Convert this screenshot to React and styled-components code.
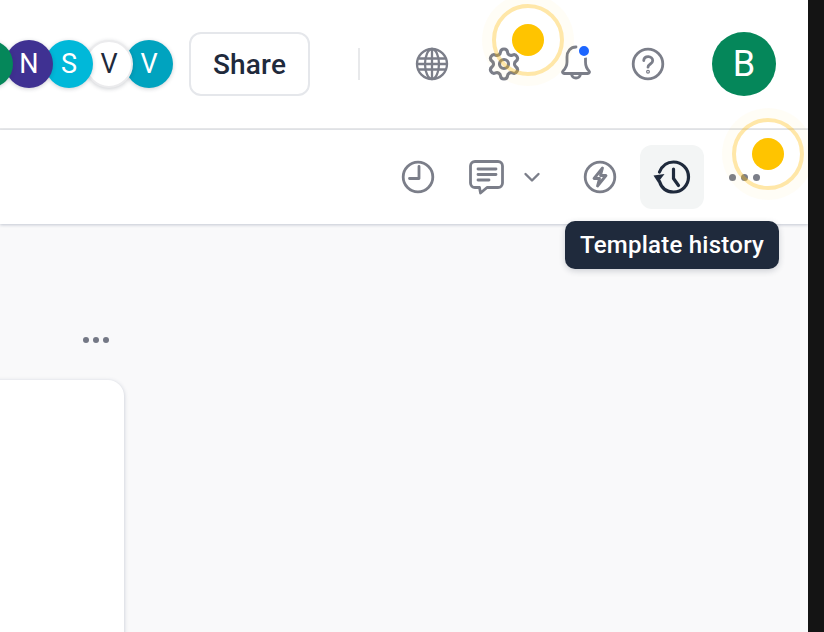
import styled, { createGlobalStyle } from "styled-components";
import { Settings } from "lucide-react";

const Global = createGlobalStyle`
    html, body { margin: 0; padding: 0; background: #141414; }
    body { font-family: Roboto, "Liberation Sans", sans-serif; }
`

const GRAY = "#7b7e89";
const NAVY = "#1f2a3c";

const Icon = ({ children, stroke = GRAY, width = 2.8 }) => (
    <svg width="32" height="32" viewBox="0 0 32 32" fill="none" stroke={stroke} strokeWidth={width}
        strokeLinecap="round" strokeLinejoin="round" style={{ overflow: "visible", display: "block", flex: "none" }}>
        {children}
    </svg>
)

const GlobeIcon = () => (
    <Icon width={2.3}>
        <circle cx="16" cy="16" r="15" />
        <ellipse cx="16" cy="16" rx="7" ry="15" />
        <path d="M16 1v30M3 10.500h26M1 16h30M3 21.500h26" />
    </Icon>
)

const BellIcon = () => (
    <Icon>
        <path d="M16 -1C10.500 -1 7 3.500 7 9v5c0 4-2 7-4 9-1 1-.5 2.500 1 2.500h24c1.500 0 2-1.500 1-2.500-2-2-3.500-5-3.500-9v-4" />
        <path d="M11.500 25.500c0 6 9 6 9 0" />
    </Icon>
)

const HelpIcon = () => (
    <Icon>
        <circle cx="16" cy="16" r="14.800" />
        <path d="M11.700 12.500c.6-5.300 9-5 9 .2 0 3.300-4.700 3.300-4.700 6.500" />
        <circle cx="16" cy="23.700" r=".6" />
    </Icon>
)

const ClockIcon = () => (
    <Icon>
        <circle cx="16" cy="16" r="14.800" />
        <path d="M17 5.500V17.500H7.500" />
    </Icon>
)

const CommentIcon = () => (
    <Icon>
        <path d="M5 0.500h23c2.500 0 4.500 2 4.500 4.500v17c0 2.500-2 4.500-4.500 4.500H17l-6.500 5.500-1-5.500H5C2.500 26.500 .5 24.500 .5 22V5C.5 2.500 2.500 .5 5 .5z" />
        <path d="M8 8h18M8 13.500h18M8 19h11" />
    </Icon>
)

const Chevron = () => (
    <svg width="20" height="20" viewBox="0 0 20 20" fill="none" stroke={GRAY} strokeWidth="2.400"
        strokeLinecap="round" strokeLinejoin="round" style={{ display: "block", flex: "none" }}>
        <path d="M3.500 7l6.500 6.500L16.500 7" />
    </svg>
)

const BoltIcon = () => (
    <Icon>
        <circle cx="16" cy="16" r="14.800" />
        <path d="M18.500 7L10 17.500h5.500l-2 7.500 8.500-10.500h-5.500z" fill="none" />
    </Icon>
)

const HistoryIcon = () => (
    <Icon stroke={NAVY} width={3.200}>
        <path d="M3.500 20.500C5.500 27 10.500 31 17.500 31c8.500 0 15-6.700 15-15S26 1 17.500 1C10.500 1 6 5 3.500 11" />
        <path d="M17.500 8v9.500l5 7" />
        <path d="M-2.500 14.500l11 -1.500-6.500 8.500z" fill={NAVY} stroke="none" />
    </Icon>
)

function App() {
    return (
        <Page>
            <Global />
            <Main>
                <Header>
                    <Avatars>
                        <Avatar $bg="#05875a" $layer={5} />
                        <Avatar $bg="#3f3192" $layer={4}>N</Avatar>
                        <Avatar $bg="#00b8d9" $layer={3}>S</Avatar>
                        <Avatar $bg="#fff" $color={NAVY} $ring $layer={2}>V</Avatar>
                        <Avatar $bg="#00a3bf" $layer={1}>V</Avatar>
                    </Avatars>
                    <ShareButton>Share</ShareButton>
                    <Divider />
                    <HeaderIcons>
                        <GlobeIcon />
                        <Settings size={36} color={GRAY} strokeWidth={2.1} style={{ margin: -2, flex: "none" }} />
                        <BellWrap>
                            <BellIcon />
                            <Badge />
                        </BellWrap>
                        <HelpIcon />
                    </HeaderIcons>
                    <Profile>B</Profile>
                    <Hotspot $left={492} $top={4}><Dot /></Hotspot>
                </Header>
                <Toolbar>
                    <ToolButton><ClockIcon /></ToolButton>
                    <CommentGroup>
                        <CommentIcon />
                        <Chevron />
                    </CommentGroup>
                    <ToolButton><BoltIcon /></ToolButton>
                    <ToolButton $active>
                        <HistoryIcon />
                        <Tooltip>Template history</Tooltip>
                    </ToolButton>
                    <ToolButton>
                        <Dots $size={7} $gap={5} $color={GRAY}><i /><i /><i /></Dots>
                    </ToolButton>
                    <Hotspot $left={732} $top={-12}><Dot /></Hotspot>
                </Toolbar>
                <Content>
                    <MenuRow>
                        <Dots $size={6} $gap={4} $color="#747885"><i /><i /><i /></Dots>
                    </MenuRow>
                    <Card />
                </Content>
            </Main>
        </Page>
    );
}

const Page = styled('div')`
    display: flex;
    width: 824px;
    height: 632px;
    overflow: hidden;
    background: #141414;
`
const Main = styled('div')`
    display: flex;
    flex-direction: column;
    width: 808px;
    height: 100%;
    overflow: hidden;
    background: #f9f9fa;
`
const Header = styled('header')`
    position: relative;
    z-index: 3;
    display: flex;
    align-items: center;
    justify-content: flex-end;
    flex: none;
    box-sizing: border-box;
    height: 130px;
    padding-right: 32px;
    background: #fff;
    border-bottom: 2px solid #e8e9eb;
`
const Avatars = styled('div')`
    display: flex;
    flex: none;
    margin-right: 16px;
`
const Avatar = styled('div')`
    position: relative;
    z-index: ${p => p.$layer};
    display: flex;
    align-items: center;
    justify-content: center;
    flex: none;
    box-sizing: border-box;
    width: 48px;
    height: 48px;
    margin-left: -8px;
    border-radius: 50%;
    background: ${p => p.$bg};
    color: ${p => p.$color || "#fff"};
    font-size: 27px;
    box-shadow: 0 1px 4px rgba(31, 42, 60, 0.22);
    border: ${p => p.$ring ? "2px solid #ebebed" : "none"};
`
const ShareButton = styled('button')`
    flex: none;
    box-sizing: border-box;
    width: 121px;
    height: 64px;
    padding: 0;
    border: 2px solid #e5e7eb;
    border-radius: 12px;
    background: #fff;
    color: ${NAVY};
    font-family: inherit;
    font-size: 28px;
    font-weight: 500;
    letter-spacing: 0.2px;
`
const Divider = styled('span')`
    flex: none;
    width: 2px;
    height: 32px;
    margin: 0 56px 0 48px;
    background: #e8e9eb;
`
const HeaderIcons = styled('div')`
    display: flex;
    flex: none;
    align-items: center;
    gap: 40px;
    margin-right: 48px;
`
const BellWrap = styled('div')`
    position: relative;
    flex: none;
`
const Badge = styled('span')`
    position: absolute;
    top: -4px;
    left: 17px;
    width: 10px;
    height: 10px;
    border: 2px solid #fff;
    border-radius: 50%;
    background: #1d66ff;
`
const Profile = styled('div')`
    display: flex;
    flex: none;
    align-items: center;
    justify-content: center;
    width: 64px;
    height: 64px;
    border-radius: 50%;
    background: #05875a;
    color: #fff;
    font-size: 36px;
`
const Hotspot = styled('div')`
    position: absolute;
    left: ${p => p.$left}px;
    top: ${p => p.$top}px;
    z-index: 6;
    display: flex;
    align-items: center;
    justify-content: center;
    box-sizing: border-box;
    width: 72px;
    height: 72px;
    border: 4px solid rgba(255, 185, 0, 0.34);
    border-radius: 50%;
    box-shadow: 0 0 0 10px rgba(255, 185, 0, 0.035);
`
const Dot = styled('span')`
    width: 32px;
    height: 32px;
    border-radius: 50%;
    background: #ffc400;
`
const Toolbar = styled('div')`
    position: relative;
    z-index: 4;
    display: flex;
    align-items: center;
    justify-content: flex-end;
    flex: none;
    gap: 8px;
    box-sizing: border-box;
    height: 94px;
    padding-right: 32px;
    background: #fff;
    box-shadow: 0 1px 3px rgba(70, 85, 120, 0.3);
`
const ToolButton = styled('div')`
    position: relative;
    display: flex;
    align-items: center;
    justify-content: center;
    width: 64px;
    height: 64px;
    border-radius: 12px;
    background: ${p => p.$active ? "#f3f5f5" : "transparent"};
`
const CommentGroup = styled('div')`
    display: flex;
    align-items: center;
    gap: 20px;
    padding: 0 18px 0 12px;
`
const Tooltip = styled('div')`
    position: absolute;
    top: 76px;
    left: -75px;
    box-sizing: border-box;
    width: 214px;
    height: 48px;
    border-radius: 10px;
    background: #1f2a3c;
    color: #fff;
    font-size: 24px;
    font-weight: 500;
    letter-spacing: 0.25px;
    line-height: 48px;
    text-align: center;
    box-shadow: 0 2px 6px rgba(31, 42, 60, 0.2);
`
const Dots = styled('div')`
    display: flex;
    gap: ${p => p.$gap}px;
    i {
        width: ${p => p.$size}px;
        height: ${p => p.$size}px;
        border-radius: 50%;
        background: ${p => p.$color};
    }
`
const Content = styled('div')`
    position: relative;
    flex: 1;
    display: flex;
    flex-direction: column;
    align-items: flex-start;
    padding-top: 113px;
`
const MenuRow = styled('div')`
    display: flex;
    justify-content: flex-end;
    width: 109px;
    height: 6px;
`
const Card = styled('div')`
    flex: none;
    width: 144px;
    height: 300px;
    margin: 37px 0 0 -20px;
    border-radius: 16px;
    background: #fff;
    box-shadow: 0 1px 4px rgba(70, 85, 120, 0.3);
`

export default App;
